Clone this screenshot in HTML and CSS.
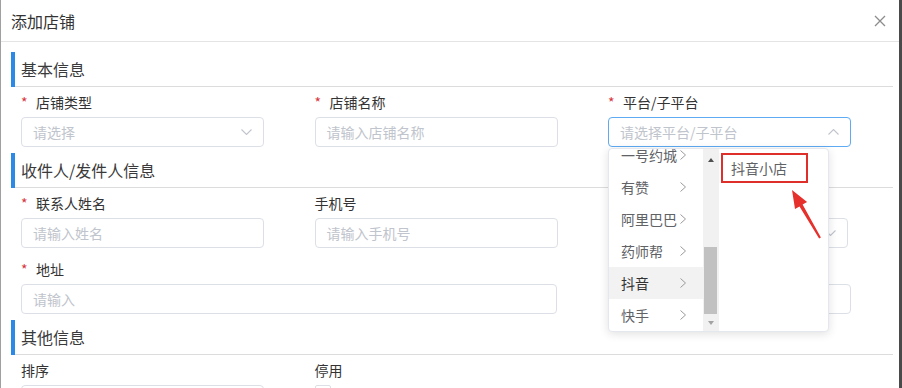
FILE: index.html
```html
<!DOCTYPE html>
<html lang="zh-CN">

<head>
    <meta charset="UTF-8">
    <title>添加店铺</title>
    <link rel="stylesheet" href="styles.css">
</head>

<body>
    <div class="dialog">
        <div class="dialog-header">
            <span class="dialog-title">添加店铺</span>
            <svg class="close" width="12" height="12" viewBox="0 0 12 12">
                <path d="M1 1L11 11M11 1L1 11" stroke="#8c8c8c" stroke-width="1.3" fill="none" />
            </svg>
        </div>

        <div class="dialog-body">
            <!-- 基本信息 -->
            <div class="section">
                <div class="section-head"><span>基本信息</span></div>
                <div class="form-row">
                    <div class="form-item">
                        <label class="form-label"><span class="star">*</span>店铺类型</label>
                        <div class="input">
                            <span>请选择</span>
                            <svg class="arrow" width="11" height="6" viewBox="0 0 11 6"><path d="M0.5 0.5L5.5 5.5L10.5 0.5" /></svg>
                        </div>
                    </div>
                    <div class="form-item">
                        <label class="form-label"><span class="star">*</span>店铺名称</label>
                        <div class="input"><span>请输入店铺名称</span></div>
                    </div>
                    <div class="form-item cascader">
                        <label class="form-label"><span class="star">*</span>平台/子平台</label>
                        <div class="input focus">
                            <span>请选择平台/子平台</span>
                            <svg class="arrow" width="11" height="6" viewBox="0 0 11 6"><path d="M0.5 5.5L5.5 0.5L10.5 5.5" /></svg>
                        </div>

                        <div class="cascader-panel">
                            <div class="menu-left">
                                <div class="menu-list">
                                    <ul>
                                        <li class="menu-item"><span>一号约城</span><svg class="chev" width="6" height="10" viewBox="0 0 6 10"><path d="M0.5 0.5L5.5 5L0.5 9.5" /></svg></li>
                                        <li class="menu-item"><span>有赞</span><svg class="chev" width="6" height="10" viewBox="0 0 6 10"><path d="M0.5 0.5L5.5 5L0.5 9.5" /></svg></li>
                                        <li class="menu-item"><span>阿里巴巴</span><svg class="chev" width="6" height="10" viewBox="0 0 6 10"><path d="M0.5 0.5L5.5 5L0.5 9.5" /></svg></li>
                                        <li class="menu-item"><span>药师帮</span><svg class="chev" width="6" height="10" viewBox="0 0 6 10"><path d="M0.5 0.5L5.5 5L0.5 9.5" /></svg></li>
                                        <li class="menu-item active"><span>抖音</span><svg class="chev" width="6" height="10" viewBox="0 0 6 10"><path d="M0.5 0.5L5.5 5L0.5 9.5" /></svg></li>
                                        <li class="menu-item"><span>快手</span><svg class="chev" width="6" height="10" viewBox="0 0 6 10"><path d="M0.5 0.5L5.5 5L0.5 9.5" /></svg></li>
                                    </ul>
                                </div>
                                <div class="scrollbar">
                                    <div class="sb-btn"><i class="tri-up"></i></div>
                                    <div class="sb-track"><div class="sb-thumb"></div></div>
                                    <div class="sb-btn"><i class="tri-down"></i></div>
                                </div>
                            </div>
                            <div class="menu-right">
                                <div class="picked">抖音小店</div>
                            </div>
                            <svg class="mark-arrow" width="48" height="58" viewBox="0 0 48 58">
                                <polygon points="16,4 31.1,16 26.6,18.6 44.9,51.5 43.1,52.5 23.5,20.5 19,23.1" fill="#e5302c" />
                            </svg>
                        </div>
                    </div>
                </div>
            </div>

            <!-- 收件人/发件人信息 -->
            <div class="section">
                <div class="section-head"><span>收件人/发件人信息</span></div>
                <div class="form-row">
                    <div class="form-item">
                        <label class="form-label"><span class="star">*</span>联系人姓名</label>
                        <div class="input"><span>请输入姓名</span></div>
                    </div>
                    <div class="form-item">
                        <label class="form-label">手机号</label>
                        <div class="input"><span>请输入手机号</span></div>
                    </div>
                    <!-- 被下拉面板遮住的字段 -->
                    <div class="form-item">
                        <label class="form-label"></label>
                        <div class="input narrow">
                            <span></span>
                            <svg class="arrow" width="11" height="6" viewBox="0 0 11 6"><path d="M0.5 0.5L5.5 5.5L10.5 0.5" /></svg>
                        </div>
                    </div>
                </div>
                <div class="form-row">
                    <div class="form-item span-2">
                        <label class="form-label"><span class="star">*</span>地址</label>
                        <div class="input wide"><span>请输入</span></div>
                    </div>
                    <div class="form-item">
                        <label class="form-label"></label>
                        <div class="input"><span></span></div>
                    </div>
                </div>
            </div>

            <!-- 其他信息 -->
            <div class="section">
                <div class="section-head"><span>其他信息</span></div>
                <div class="form-row">
                    <div class="form-item">
                        <label class="form-label">排序</label>
                        <div class="input"><span></span></div>
                    </div>
                    <div class="form-item">
                        <label class="form-label">停用</label>
                        <div class="checkbox"></div>
                    </div>
                </div>
            </div>
        </div>
    </div>
</body>

</html>
```

FILE: styles.css
```css
html,
body {
    margin: 0;
    height: 100%;
    overflow: hidden;
}

body {
    background: #4a4a4a;
    font-family: "Noto Sans CJK SC", "Microsoft YaHei", sans-serif;
    font-size: 14px;
    color: #333;
}

ul {
    list-style: none;
    margin: 0;
    padding: 0;
}

.dialog {
    width: 899px;
    height: 388px;
    box-sizing: border-box;
    background: #fff;
    border-left: 1px solid #a0a0a0;
    overflow: hidden;
}

.dialog-header {
    height: 42px;
    box-sizing: border-box;
    border-bottom: 1px solid #e4e4e4;
    display: flex;
    align-items: center;
    justify-content: space-between;
    padding: 0 13px 0 10px;
}

.dialog-title {
    font-size: 16px;
    line-height: 20px;
    color: #333;
}

.dialog-body {
    padding: 10px 6px 0 10px;
}

.section {
    margin-bottom: 6px;
}

.section-head {
    display: flex;
    height: 35px;
}

.section-head::before {
    content: "";
    width: 4px;
    background: #2c8ae6;
}

.section-head span {
    flex: 1;
    border-bottom: 1px solid #dcdcdc;
    padding-left: 6px;
    font-size: 16px;
    line-height: 34px;
    color: #3a3a3a;
}

.form-row {
    display: grid;
    grid-template-columns: repeat(3, 293.5px);
    padding-left: 10px;
    margin-top: 5px;
}

.form-row + .form-row {
    margin-top: 11px;
}

.form-item {
    position: relative;
}

.span-2 {
    grid-column: span 2;
}

.form-label {
    display: block;
    height: 20px;
    line-height: 20px;
    margin-bottom: 5px;
    color: #333;
    white-space: nowrap;
}

.star {
    display: inline-block;
    width: 15px;
    color: #d9363e;
}

.input {
    width: 243px;
    height: 30px;
    box-sizing: border-box;
    border: 1px solid #dcdfe6;
    border-radius: 4px;
    padding: 0 11px;
    display: flex;
    align-items: center;
    justify-content: space-between;
    color: #c0c4cc;
    line-height: 20px;
    background: #fff;
}

.input.focus {
    border-color: #5eaaf3;
}

.input.wide {
    width: 536px;
}

.input.narrow {
    width: 240px;
}

.arrow path {
    fill: none;
    stroke: #c0c4cc;
    stroke-width: 1.1;
}

.checkbox {
    width: 14px;
    height: 14px;
    border: 1px solid #dcdfe6;
    border-radius: 2px;
}

/* 级联下拉面板 */
.cascader-panel {
    position: absolute;
    left: 0;
    top: calc(100% + 1px);
    z-index: 10;
    display: flex;
    width: 221px;
    height: 184px;
    box-sizing: border-box;
    background: #fff;
    border: 1px solid #e4e7ed;
    border-radius: 4px;
    box-shadow: 0 2px 10px rgba(0, 0, 0, 0.12);
    overflow: hidden;
}

.menu-left {
    display: flex;
    width: 110px;
}

.menu-list {
    width: 94px;
    overflow: hidden;
}

.menu-list ul {
    margin-top: -10px;
}

.menu-item {
    height: 32px;
    display: flex;
    align-items: center;
    justify-content: space-between;
    padding: 0 17px 0 12px;
    color: #606266;
    white-space: nowrap;
}

.menu-item.active {
    background: #f2f2f2;
    color: #333;
}

.chev path {
    fill: none;
    stroke: #9a9a9a;
    stroke-width: 1;
}

.scrollbar {
    width: 16px;
    background: #f1f1f1;
    display: flex;
    flex-direction: column;
}

.sb-btn {
    height: 17px;
    display: flex;
    align-items: center;
    justify-content: center;
}

.tri-up {
    margin-top: 4px;
    border-left: 3.5px solid transparent;
    border-right: 3.5px solid transparent;
    border-bottom: 4px solid #505050;
}

.tri-down {
    border-left: 3.5px solid transparent;
    border-right: 3.5px solid transparent;
    border-top: 4px solid #a3a3a3;
}

.sb-track {
    flex: 1;
    padding: 0 2px 0 1px;
}

.sb-thumb {
    margin-top: 81px;
    height: 67px;
    background: #c1c1c1;
}

.menu-right {
    flex: 1;
    padding: 4px 0 0 2px;
}

.picked {
    width: 87px;
    height: 30px;
    box-sizing: border-box;
    border: 2px solid #de2f2b;
    padding-left: 8px;
    line-height: 26px;
    color: #606266;
}

.mark-arrow {
    position: absolute;
    left: 167px;
    top: 37px;
}
```
